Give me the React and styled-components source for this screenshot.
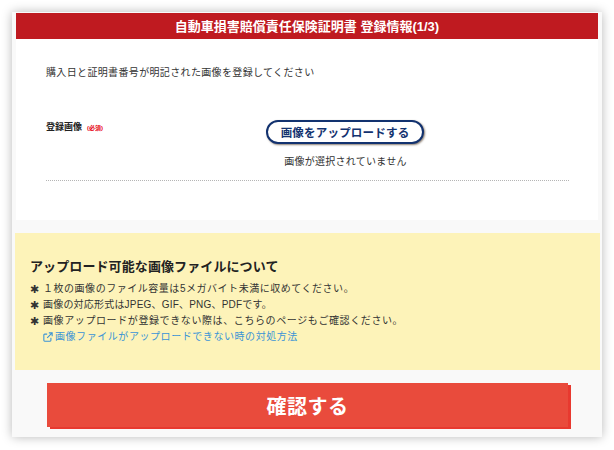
import styled, { createGlobalStyle } from 'styled-components';

const jp = '"Liberation Sans", "Noto Sans CJK JP", sans-serif';

const GlobalStyle = createGlobalStyle`
  html, body {
    margin: 0;
    padding: 0;
    background: #fff;
    font-family: ${jp};
  }
`;

const Page = styled.div`
  width: 614px;
  height: 450px;
  padding: 12px 12px 13px;
  box-sizing: border-box;
  overflow: hidden;
`;

const Frame = styled.div`
  height: 425px;
  background: #f9f9f9;
  box-shadow: 0 0 10px rgba(0, 0, 0, 0.28);
  display: flex;
  flex-direction: column;
`;

const Sheet = styled.div`
  margin: 1px 4px 0;
  height: 207px;
  background: #fff;
  display: flex;
  flex-direction: column;
`;

const Header = styled.h1`
  margin: 0;
  height: 26px;
  flex: none;
  background: #bf1a20;
  color: #fff;
  font-size: 13px;
  font-weight: 700;
  line-height: 27px;
  text-align: center;
`;

const Lead = styled.p`
  margin: 26px 0 0 30px;
  font-size: 10px;
  line-height: 15px;
  letter-spacing: 0.35px;
  color: #333;
`;

const FormRow = styled.div`
  margin: 40px 29px 0 30px;
  height: 61px;
  display: flex;
  border-bottom: 1px dotted #b5b5b5;
  box-sizing: border-box;
`;

const FieldLabel = styled.div`
  width: 220px;
  flex: none;
  padding-top: 1px;
  font-size: 9px;
  font-weight: 700;
  line-height: 13px;
  color: #222;
`;

const Required = styled.span`
  margin-left: 5px;
  font-size: 6px;
  color: #e60012;
`;

const UploadColumn = styled.div`
  display: flex;
  flex-direction: column;
  align-items: center;
  width: 158px;
`;

const UploadButton = styled.button`
  width: 158px;
  height: 24px;
  flex: none;
  padding: 0;
  border: 2px solid #12326f;
  border-radius: 12px;
  background: #fff;
  box-shadow: 1px 1px 2px rgba(60, 40, 20, 0.6);
  color: #12326f;
  font-family: ${jp};
  font-size: 11.5px;
  font-weight: 700;
  letter-spacing: 0.2px;
`;

const FileStatus = styled.div`
  margin: 11px 0 0 1px;
  font-size: 10px;
  line-height: 14px;
  letter-spacing: 0.25px;
  color: #333;
  white-space: nowrap;
`;

const Notice = styled.section`
  margin: 13px 2px 0 3px;
  height: 137px;
  flex: none;
  padding: 25px 15px 0;
  box-sizing: border-box;
  background: #fdf3b9;
`;

const NoticeTitle = styled.h2`
  margin: 0 0 5px;
  font-size: 13px;
  font-weight: 700;
  line-height: 18px;
  letter-spacing: 0.1px;
  color: #222;
`;

const NoteList = styled.ul`
  margin: 0;
  padding: 0;
  list-style: none;
`;

const NoteItem = styled.li`
  display: flex;
  font-size: 10px;
  line-height: 16px;
  letter-spacing: ${(props) => props.$spacing}px;
  color: #333;
`;

const Mark = styled.span`
  width: 13px;
  flex: none;
  font-size: 11px;
  letter-spacing: 0;
`;

const HelpLink = styled.a`
  display: flex;
  align-items: center;
  gap: 2px;
  margin-left: 13px;
  font-size: 10px;
  line-height: 16px;
  letter-spacing: 0.56px;
  color: #3a93d6;
  text-decoration: none;
`;

const LinkIcon = styled.svg`
  width: 10px;
  height: 10px;
  flex: none;
`;

const Footer = styled.div`
  padding: 13px 0 0 35px;
`;

const SubmitButton = styled.button`
  display: block;
  width: 521px;
  height: 44px;
  padding: 0;
  border: 0;
  background: #e94b3c;
  box-shadow: 3px 2px 0 #e8392f;
  color: #fff;
  font-family: ${jp};
  font-size: 20px;
  font-weight: 700;
  letter-spacing: 0.5px;
`;

export default function App() {
  return (
    <Page>
      <GlobalStyle />
      <Frame>
        <Sheet>
          <Header>自動車損害賠償責任保険証明書 登録情報(1/3)</Header>
          <Lead>購入日と証明書番号が明記された画像を登録してください</Lead>
          <FormRow>
            <FieldLabel>
              登録画像<Required>(必須)</Required>
            </FieldLabel>
            <UploadColumn>
              <UploadButton type="button">画像をアップロードする</UploadButton>
              <FileStatus>画像が選択されていません</FileStatus>
            </UploadColumn>
          </FormRow>
        </Sheet>
        <Notice>
          <NoticeTitle>アップロード可能な画像ファイルについて</NoticeTitle>
          <NoteList>
            <NoteItem $spacing={0.53}><Mark>✱</Mark>１枚の画像のファイル容量は5メガバイト未満に収めてください。</NoteItem>
            <NoteItem $spacing={0.2}><Mark>✱</Mark>画像の対応形式はJPEG、GIF、PNG、PDFです。</NoteItem>
            <NoteItem $spacing={0.6}><Mark>✱</Mark>画像アップロードが登録できない際は、こちらのページもご確認ください。</NoteItem>
          </NoteList>
          <HelpLink href="#">
            <LinkIcon viewBox="0 0 12 12" fill="none" stroke="currentColor" strokeWidth="1.3">
              <path d="M9.5 7v3a1 1 0 0 1-1 1H2a1 1 0 0 1-1-1V3.500a1 1 0 0 1 1-1h3" />
              <path d="M7 1h4v4M11 1 5 7" />
            </LinkIcon>
            画像ファイルがアップロードできない時の対処方法
          </HelpLink>
        </Notice>
        <Footer>
          <SubmitButton type="button">確認する</SubmitButton>
        </Footer>
      </Frame>
    </Page>
  );
}
